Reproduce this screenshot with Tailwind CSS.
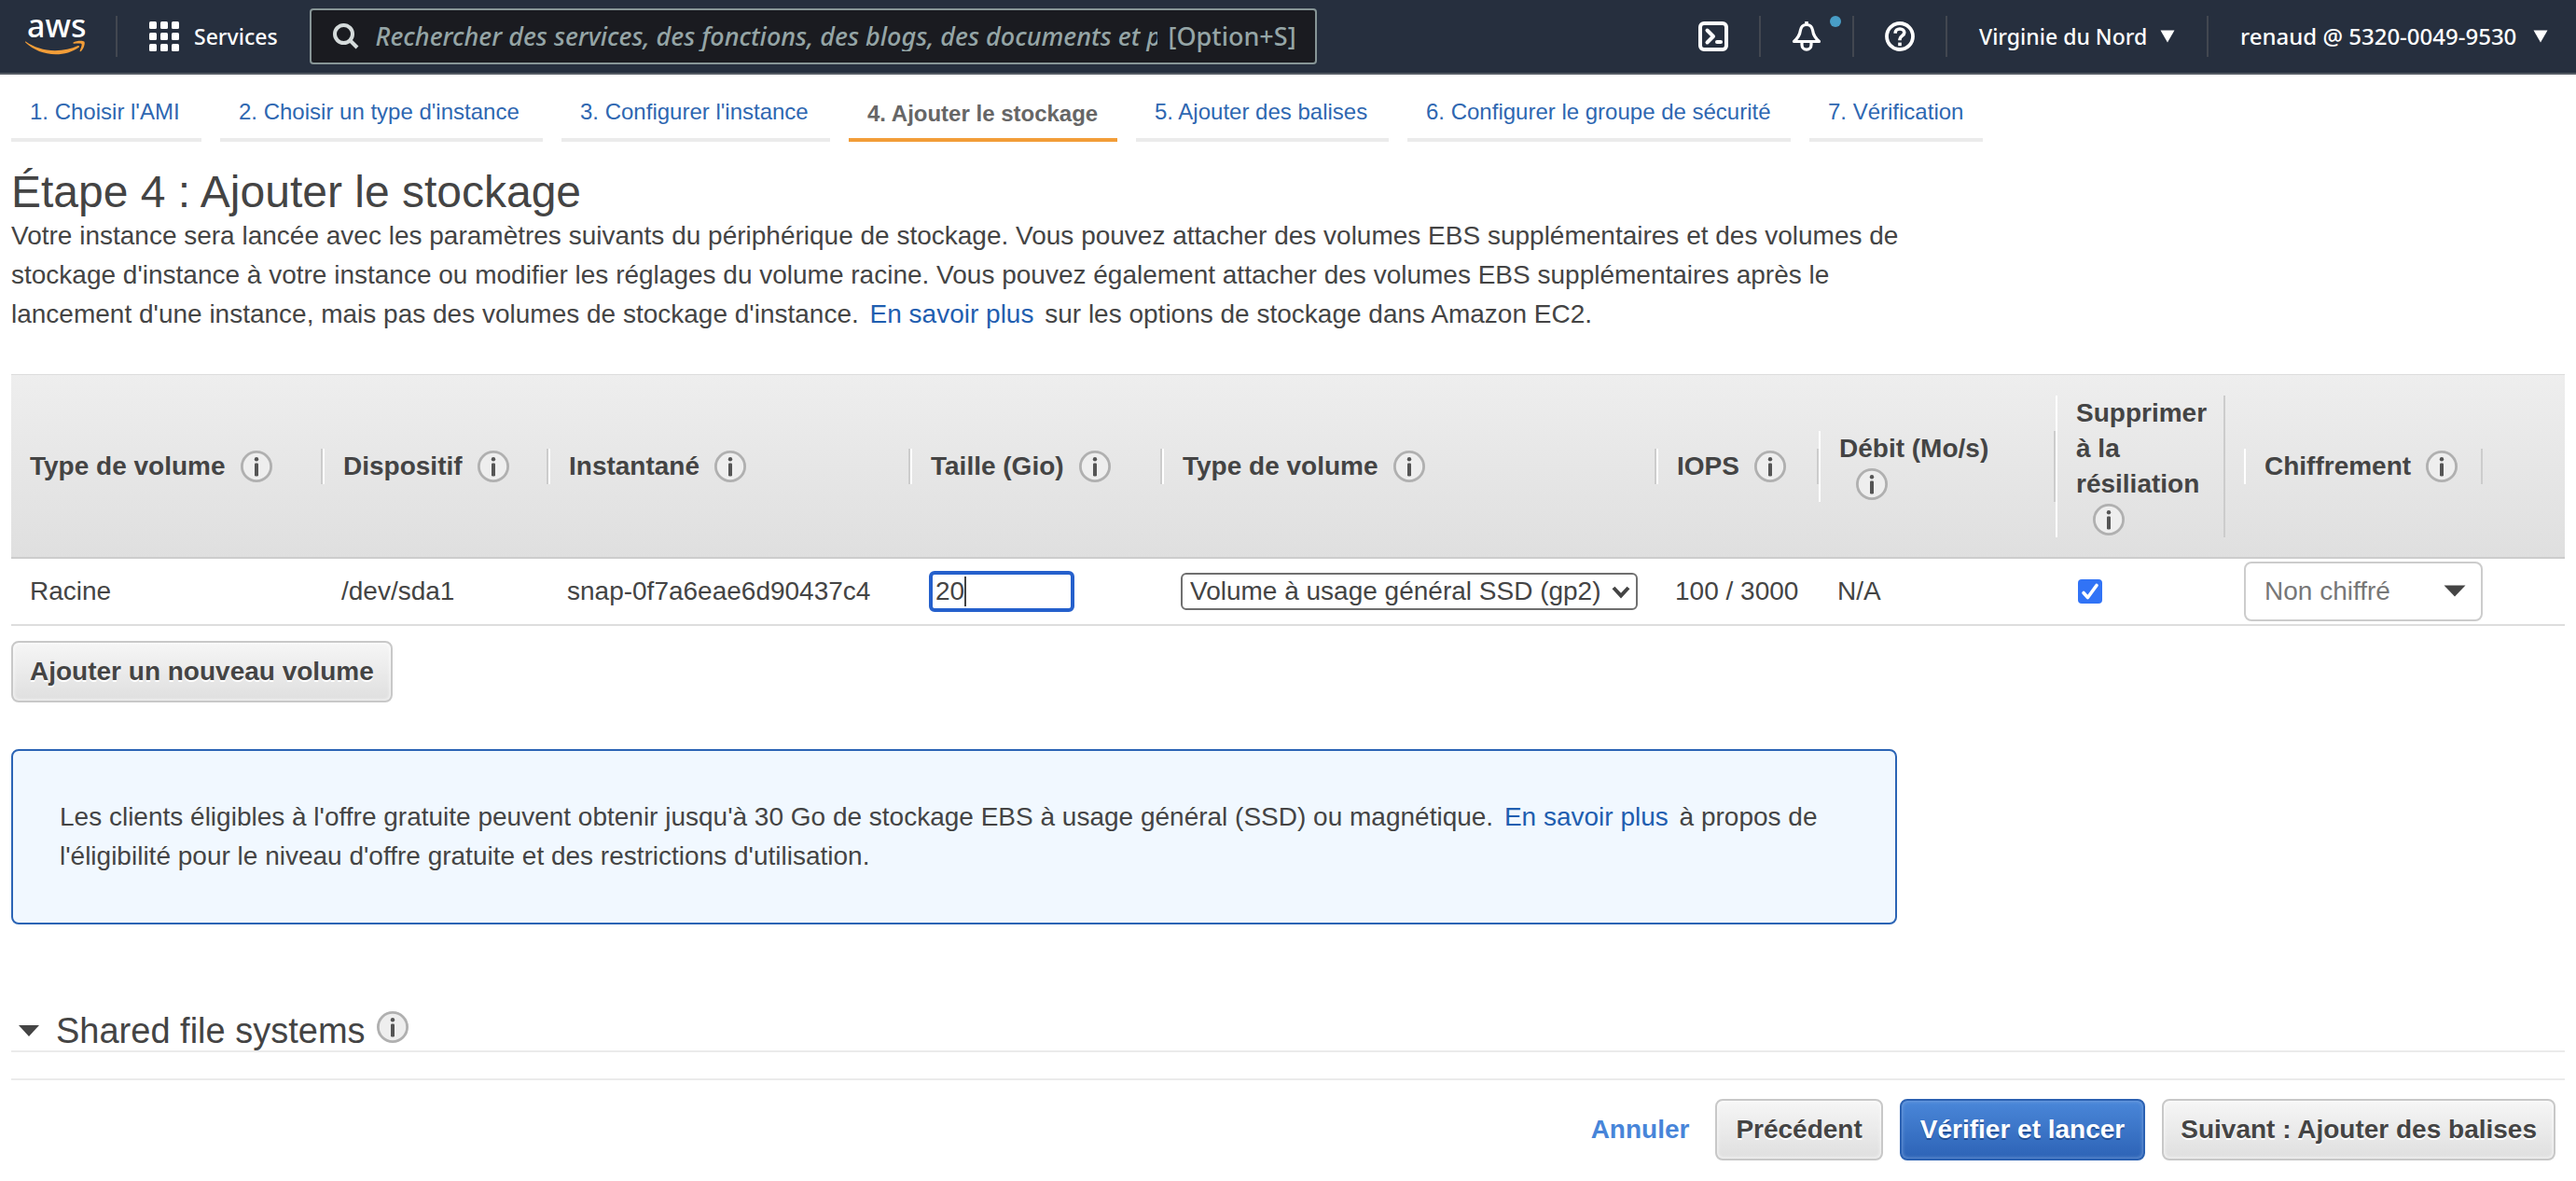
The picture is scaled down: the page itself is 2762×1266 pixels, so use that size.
<!DOCTYPE html>
<html lang="fr">
<head>
<meta charset="utf-8">
<meta name="viewport" content="width=device-width, initial-scale=1">
<title>Étape 4 : Ajouter le stockage</title>
<script src="https://cdn.jsdelivr.net/npm/@tailwindcss/browser@4"></script>
</head>
<body class="bg-white text-[28px] leading-[42px] text-[#444] font-['Liberation_Sans',Arial,sans-serif]">

<!-- Shared info icon -->
<svg class="hidden" aria-hidden="true">
  <symbol id="info" viewBox="0 0 34 34">
    <circle cx="17" cy="17" r="15.6" fill="#eee" stroke="#b0b0b0" stroke-width="2.8"/>
    <circle cx="17" cy="9.300" r="2.200" fill="#555"/>
    <rect x="15" y="13.400" width="4" height="14" rx="1.200" fill="#555"/>
  </symbol>
</svg>

<header class="flex h-20 items-center border-b-2 border-[#545b64] bg-[#262f3e] text-[23px] font-medium leading-8 text-white font-['Noto_Sans',sans-serif]">
  <a href="#" aria-label="Accueil AWS" class="ml-[26px] block shrink-0">
    <svg width="66" height="78" viewBox="26 0 66 78">
      <text x="29" y="40" font-family="Noto Sans, sans-serif" font-size="34" font-weight="500" fill="#fff">aws</text>
      <path d="M27.6 44.6C36 50.6 47 54.2 59 54.2C68.500 54.2 76.500 52.300 83.600 49.100C84.700 48.600 85.600 49.900 84.600 50.700C77.500 55.700 69 58.200 59.800 58.200C47 58.200 36 53.600 27.500 45.800C26.800 45.100 27 44.300 27.600 44.600Z" fill="#f29d38"/>
      <path d="M78.600 45.600C81.500 43.700 88.500 43.300 90.300 44.600C91.600 46 90.200 52 86.800 55C86 55.600 85.300 55.200 85.700 54.300C86.600 52 88.200 48.200 87.400 47.100C86.600 46.100 82 46.600 79.300 46.800C78.400 46.900 78 46.200 78.600 45.600Z" fill="#f29d38"/>
    </svg>
  </a>
  <span class="ml-8 h-11 w-0.5 shrink-0 bg-[#424750]"></span>
  <button type="button" class="ml-[34px] flex shrink-0 items-center gap-4">
    <svg width="32" height="32" viewBox="0 0 32 32" fill="#fff">
      <rect width="8" height="8" rx="1.500"/><rect x="12" width="8" height="8" rx="1.500"/><rect x="24" width="8" height="8" rx="1.500"/>
      <rect y="12" width="8" height="8" rx="1.500"/><rect x="12" y="12" width="8" height="8" rx="1.500"/><rect x="24" y="12" width="8" height="8" rx="1.500"/>
      <rect y="24" width="8" height="8" rx="1.500"/><rect x="12" y="24" width="8" height="8" rx="1.500"/><rect x="24" y="24" width="8" height="8" rx="1.500"/>
    </svg>
    Services
  </button>
  <div class="ml-[34px] flex h-[60px] w-[1080px] items-center rounded border-2 border-[#879596] bg-[#1a1b20] pl-[22px] pr-5 text-[27px] text-[#95a5a6]">
    <svg class="shrink-0" width="30" height="30" viewBox="0 0 30 30" fill="none" stroke="#d5dbdb" stroke-width="4"><circle cx="12.500" cy="12.500" r="9.500"/><path d="M19 19L27 27"/></svg>
    <input type="text" aria-label="Rechercher" placeholder="Rechercher des services, des fonctions, des blogs, des documents et plus encore" class="ml-[17px] min-w-0 flex-1 bg-transparent italic outline-none placeholder:text-[#95a5a6]">
    <span class="ml-3">[Option+S]</span>
  </div>
  <nav aria-label="Compte" class="ml-auto flex shrink-0 items-center">
    <button type="button" aria-label="CloudShell" class="flex h-11 w-[100px] items-center justify-center border-r-2 border-[#424750]">
      <svg width="32" height="32" viewBox="0 0 32 32" fill="none" stroke="#fff" stroke-width="4"><rect x="2" y="2" width="28" height="28" rx="4"/><path d="M9.500 9.500L16 16L9.500 22.500" stroke-linecap="round" stroke-linejoin="round"/><path d="M20 22H24" stroke-linecap="round"/></svg>
    </button>
    <button type="button" aria-label="Notifications" class="relative flex h-11 w-[100px] items-center justify-center border-r-2 border-[#424750]">
      <svg width="32" height="32" viewBox="0 0 32 32" fill="none" stroke="#fff" stroke-width="3.200" stroke-linejoin="round"><path d="M16 0V4" stroke-width="3.600"/><path d="M16 3.500C12 3.500 9.800 6.500 9.300 10C8.800 14.500 7.500 17 2.500 21.500H29.500C24.500 17 23.200 14.500 22.700 10C22.200 6.500 20 3.500 16 3.500Z"/><path d="M11 22V25C11 28 13.200 30.200 16 30.200S21 28 21 25V22"/></svg>
      <span class="absolute right-3 top-0 size-3 rounded-full bg-[#489dc6]"></span>
    </button>
    <button type="button" aria-label="Aide" class="flex h-11 w-[100px] items-center justify-center border-r-2 border-[#424750]">
      <svg width="32" height="32" viewBox="0 0 32 32" fill="none" stroke="#fff"><circle cx="16" cy="16" r="14" stroke-width="3.800"/><path d="M11.200 12.800V12C11.200 9.600 13.200 8 16 8S20.800 9.600 20.800 12C20.800 15.400 16 15.400 16 19V20.300" stroke-width="3.600"/><rect x="14.200" y="22.600" width="3.600" height="3.600" fill="#fff" stroke="none"/></svg>
    </button>
    <button type="button" class="flex h-11 w-[280px] items-center justify-between border-r-2 border-[#424750] pl-[34px] pr-[34px]">
      Virginie du Nord
      <svg width="16" height="14" viewBox="0 0 16 14" fill="#fff"><path d="M0.500 0.500H15.500L8 13.500Z"/></svg>
    </button>
    <button type="button" class="flex h-11 w-[394px] items-center justify-between pl-[34px] pr-[30px] text-2xl">
      renaud @ 5320-0049-9530
      <svg width="16" height="14" viewBox="0 0 16 14" fill="#fff"><path d="M0.500 0.500H15.500L8 13.500Z"/></svg>
    </button>
  </nav>
</header>

<main class="px-3">
  <nav aria-label="Étapes" class="grid grid-cols-[204px_346px_288px_288px_271px_411px_186px] gap-5 whitespace-nowrap pt-2 text-2xl leading-8 text-[#2e67b1]">
    <a href="#" class="border-b-4 border-[#ebebeb] px-5 pb-3 pt-4">1. Choisir l'AMI</a>
    <a href="#" class="border-b-4 border-[#ebebeb] px-5 pb-3 pt-4">2. Choisir un type d'instance</a>
    <a href="#" class="border-b-4 border-[#ebebeb] px-5 pb-3 pt-4">3. Configurer l'instance</a>
    <a href="#" aria-current="step" class="border-b-4 border-[#f29d38] px-5 pb-2.5 pt-[18px] font-bold text-[#666]">4. Ajouter le stockage</a>
    <a href="#" class="border-b-4 border-[#ebebeb] px-5 pb-3 pt-4">5. Ajouter des balises</a>
    <a href="#" class="border-b-4 border-[#ebebeb] px-5 pb-3 pt-4">6. Configurer le groupe de sécurité</a>
    <a href="#" class="border-b-4 border-[#ebebeb] px-5 pb-3 pt-4">7. Vérification</a>
  </nav>

  <h1 class="mt-7 text-5xl leading-[52px]">Étape 4 : Ajouter le stockage</h1>
  <p class="max-w-[2040px]">Votre instance sera lancée avec les paramètres suivants du périphérique de stockage. Vous pouvez attacher des volumes EBS supplémentaires et des volumes de stockage d'instance à votre instance ou modifier les réglages du volume racine. Vous pouvez également attacher des volumes EBS supplémentaires après le lancement d'une instance, mais pas des volumes de stockage d'instance. <a href="#" class="mx-1 text-[#1f5eb0]">En savoir plus</a> sur les options de stockage dans Amazon EC2.</p>

  <table class="mt-[43px] w-full table-fixed border-separate border-spacing-0 text-left">
    <colgroup>
      <col class="w-[334px]"><col class="w-[242px]"><col class="w-[388px]"><col class="w-[270px]"><col class="w-[530px]"><col class="w-[174px]"><col class="w-[254px]"><col class="w-[202px]"><col class="w-[256px]"><col>
    </colgroup>
    <thead class="whitespace-nowrap leading-[38px]">
      <tr class="h-[198px] bg-linear-to-b from-[#eee] to-[#dfdfdf]">
        <th scope="col" class="border-b-2 border-t border-b-[#ccc] border-t-[#ddd] p-0"><div class="flex items-center gap-4 border-r-2 border-[#ccc] pl-5">Type de volume <svg class="size-[34px]"><use href="#info"/></svg></div></th>
        <th scope="col" class="border-b-2 border-t border-b-[#ccc] border-t-[#ddd] p-0"><div class="flex items-center gap-4 border-x-2 border-l-white border-r-[#ccc] pl-5">Dispositif <svg class="size-[34px]"><use href="#info"/></svg></div></th>
        <th scope="col" class="border-b-2 border-t border-b-[#ccc] border-t-[#ddd] p-0"><div class="flex items-center gap-4 border-x-2 border-l-white border-r-[#ccc] pl-5">Instantané <svg class="size-[34px]"><use href="#info"/></svg></div></th>
        <th scope="col" id="size-label" class="border-b-2 border-t border-b-[#ccc] border-t-[#ddd] p-0"><div class="flex items-center gap-4 border-x-2 border-l-white border-r-[#ccc] pl-5">Taille (Gio) <svg class="size-[34px]"><use href="#info"/></svg></div></th>
        <th scope="col" id="type-label" class="border-b-2 border-t border-b-[#ccc] border-t-[#ddd] p-0"><div class="flex items-center gap-4 border-x-2 border-l-white border-r-[#ccc] pl-5">Type de volume <svg class="size-[34px]"><use href="#info"/></svg></div></th>
        <th scope="col" class="border-b-2 border-t border-b-[#ccc] border-t-[#ddd] p-0"><div class="flex items-center gap-4 border-x-2 border-l-white border-r-[#ccc] pl-5">IOPS <svg class="size-[34px]"><use href="#info"/></svg></div></th>
        <th scope="col" class="border-b-2 border-t border-b-[#ccc] border-t-[#ddd] p-0"><div class="border-x-2 border-l-white border-r-[#ccc] pl-5">Débit (Mo/s)<span class="flex h-[38px] items-center pl-[18px]"><svg class="size-[34px]"><use href="#info"/></svg></span></div></th>
        <th scope="col" id="delete-label" class="border-b-2 border-t border-b-[#ccc] border-t-[#ddd] p-0"><div class="mr-5 border-x-2 border-l-white border-r-[#ccc] pl-5">Supprimer<br>à la<br>résiliation<span class="flex h-[38px] items-center pl-[18px]"><svg class="size-[34px]"><use href="#info"/></svg></span></div></th>
        <th scope="col" id="encryption-label" class="border-b-2 border-t border-b-[#ccc] border-t-[#ddd] p-0"><div class="flex items-center gap-4 border-x-2 border-l-white border-r-[#ccc] pl-5">Chiffrement <svg class="size-[34px]"><use href="#info"/></svg></div></th>
        <td class="border-b-2 border-t border-b-[#ccc] border-t-[#ddd] p-0"></td>
      </tr>
    </thead>
    <tbody>
      <tr class="h-[72px]">
        <td class="border-b-2 border-[#ddd] px-5 py-0">Racine</td>
        <td class="border-b-2 border-[#ddd] px-5 py-0">/dev/sda1</td>
        <td class="border-b-2 border-[#ddd] px-5 py-0">snap-0f7a6eae6d90437c4</td>
        <td class="border-b-2 border-[#ddd] px-5 py-0">
          <div class="relative w-[156px]">
            <input type="text" value="20" aria-labelledby="size-label" class="block h-11 w-full rounded-md border-4 border-[#2560cc] bg-white px-[3px] outline-none">
            <span class="absolute left-[38px] top-1.5 h-8 w-0.5 bg-[#444]"></span>
          </div>
        </td>
        <td class="border-b-2 border-[#ddd] px-5 py-0">
          <div class="relative w-[490px]">
            <select aria-labelledby="type-label" class="block h-10 w-full appearance-none rounded-md border-2 border-[#6f6f6f] bg-white px-2 leading-8"><option>Volume à usage général SSD (gp2)</option></select>
            <svg class="pointer-events-none absolute right-2 top-3.5" width="20" height="14" viewBox="0 0 20 14" fill="none" stroke="#444" stroke-width="4"><path d="M2 2L10 10.500L18 2"/></svg>
          </div>
        </td>
        <td class="whitespace-nowrap border-b-2 border-[#ddd] px-5 py-0">100 / 3000</td>
        <td class="border-b-2 border-[#ddd] px-5 py-0">N/A</td>
        <td class="border-b-2 border-[#ddd] px-6 py-0">
          <span class="relative block size-[26px]">
            <input type="checkbox" checked aria-labelledby="delete-label" class="block size-full appearance-none rounded bg-[#3173f6]">
            <svg class="pointer-events-none absolute inset-0" width="26" height="26" viewBox="0 0 26 26" fill="none" stroke="#fff" stroke-width="3.600" stroke-linecap="round" stroke-linejoin="round"><path d="M6 14.500L10.500 19.500L20 6.500"/></svg>
          </span>
        </td>
        <td class="border-b-2 border-[#ddd] p-0">
          <div class="relative">
            <select aria-labelledby="encryption-label" class="block h-16 w-full appearance-none rounded-lg border-2 border-[#ccc] bg-white px-5 text-[#777]"><option>Non chiffré</option></select>
            <svg class="pointer-events-none absolute right-[18px] top-[25px]" width="24" height="13" viewBox="0 0 24 13" fill="#444"><path d="M0.500 0.500H23.500L12 12.500Z"/></svg>
          </div>
        </td>
        <td class="border-b-2 border-[#ddd] p-0"></td>
      </tr>
    </tbody>
  </table>

  <button type="button" class="mt-4 block h-[66px] rounded-lg border-2 border-[#c8c8c8] bg-linear-to-b from-[#f6f6f6] to-[#dfdfdf] px-[18px] font-bold inset-shadow-[0_0_4px_#fff] [text-shadow:0_2px_0_#fff]">Ajouter un nouveau volume</button>

  <p class="mt-[50px] max-w-[2022px] rounded-lg border-2 border-[#2b64b5] bg-[#f1f8ff] p-[50px]">Les clients éligibles à l'offre gratuite peuvent obtenir jusqu'à 30 Go de stockage EBS à usage général (SSD) ou magnétique. <a href="#" class="mx-1 text-[#1f5eb0]">En savoir plus</a> à propos de l'éligibilité pour le niveau d'offre gratuite et des restrictions d'utilisation.</p>

  <h2 class="mt-[93px] flex items-center border-b-2 border-[#ebebeb] pl-2 text-[38px] leading-[42px]">
    <svg class="mr-[18px]" width="22" height="12" viewBox="0 0 22 12" fill="#444"><path d="M0 0H22L11 12Z"/></svg>
    Shared file systems
    <svg class="mb-2 ml-3 size-[34px]"><use href="#info"/></svg>
  </h2>

  <footer class="mt-7 flex items-center justify-end gap-[18px] border-t-2 border-[#ebebeb] pr-2.5 pt-5 font-bold">
    <a href="#" class="mr-2.5 text-[#4785d9]">Annuler</a>
    <button type="button" class="h-[66px] rounded-lg border-2 border-[#c8c8c8] bg-linear-to-b from-[#f6f6f6] to-[#dfdfdf] px-5 inset-shadow-[0_0_4px_#fff] [text-shadow:0_2px_0_#fff]">Précédent</button>
    <button type="button" class="h-[66px] rounded-lg border-2 border-[#2b61b2] bg-linear-to-b from-[#4a87d9] to-[#2d63b6] px-5 text-white inset-shadow-[0_0_4px_#7fa8e0] [text-shadow:0_2px_0_#234f96]">Vérifier et lancer</button>
    <button type="button" class="h-[66px] rounded-lg border-2 border-[#c8c8c8] bg-linear-to-b from-[#f6f6f6] to-[#dfdfdf] px-[18px] inset-shadow-[0_0_4px_#fff] [text-shadow:0_2px_0_#fff]">Suivant : Ajouter des balises</button>
  </footer>
</main>
</body>
</html>
